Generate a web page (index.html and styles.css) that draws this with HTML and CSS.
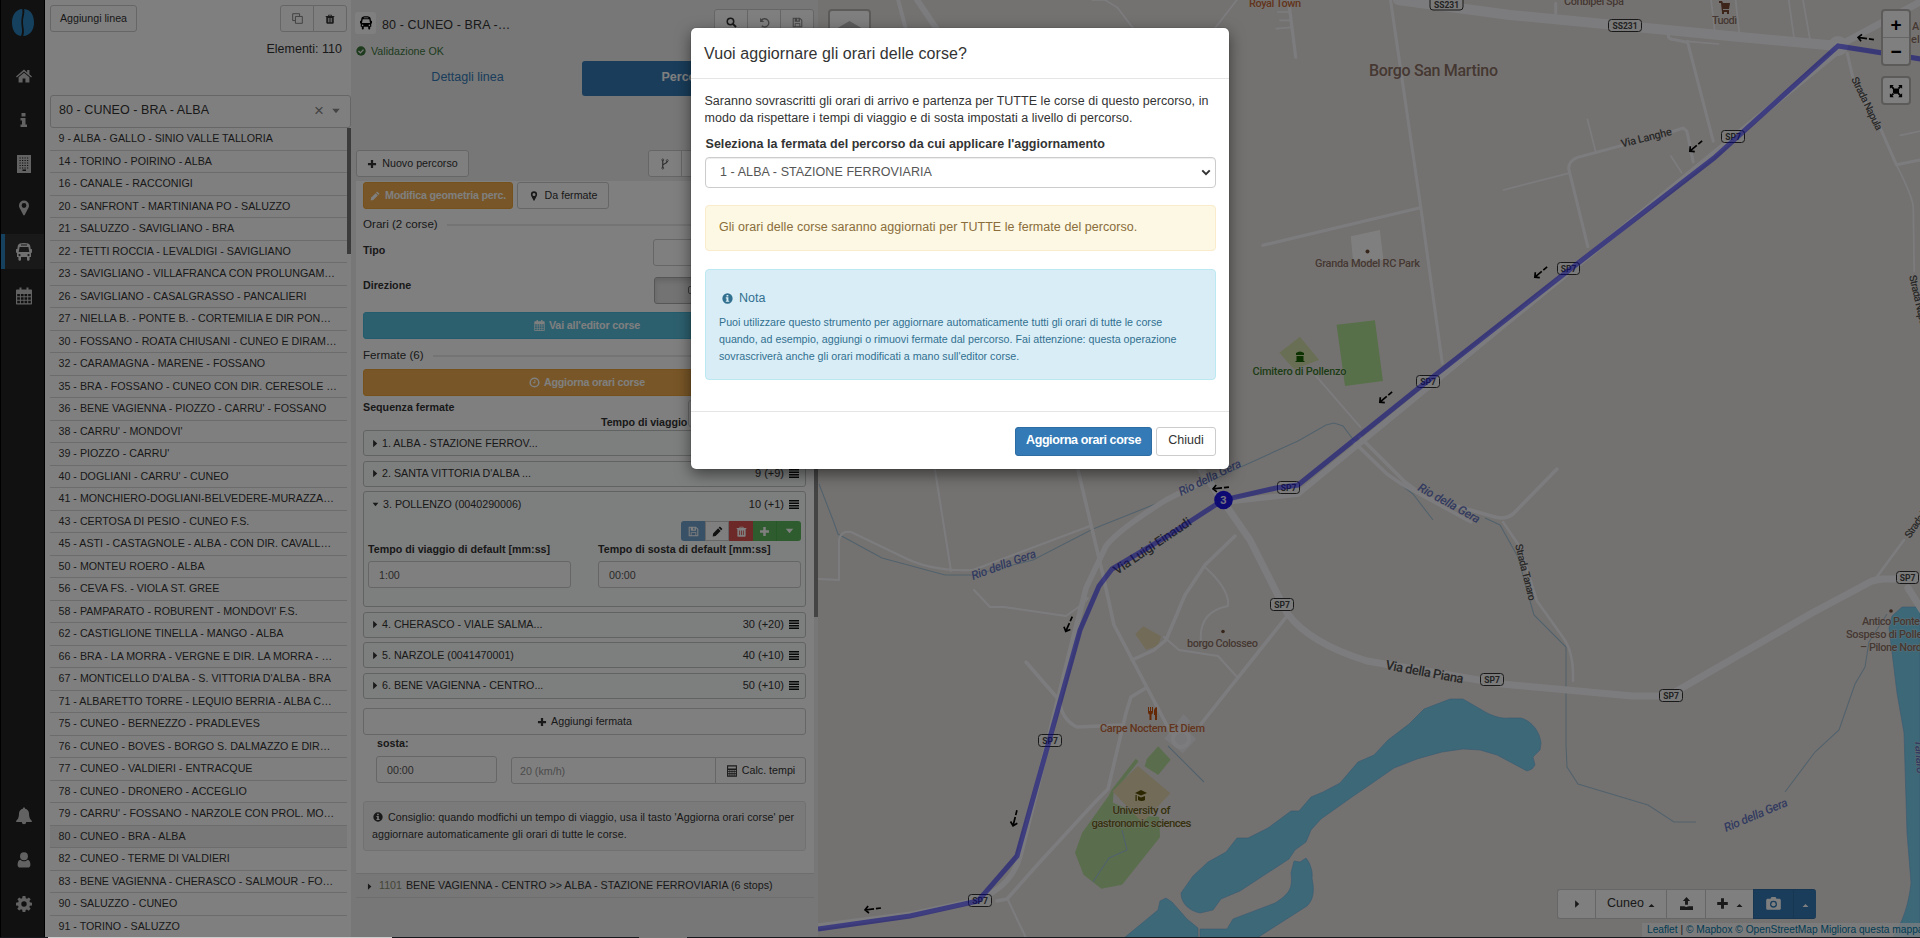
FILE: index.html
```html
<!DOCTYPE html>
<html lang="it">
<head>
<meta charset="utf-8">
<title>Linee</title>
<link rel="stylesheet" href="styles.css">
</head>
<body>
<svg class="defs" width="0" height="0" aria-hidden="true">
  <symbol id="home" viewBox="0 0 16 16"><path d="M8 1.600 0 8.400l.9 1L8 3.600l7.100 5.800.9-1-2.600-2.200V2h-2.200v2.400zM8 4.800 2.600 9.200V14.500h4V10.500h2.800v4h4V9.200z"/></symbol>
  <symbol id="info" viewBox="0 0 16 16"><path d="M5.500 1h4v3.400h-4zM4.500 6h5v6.500h1.500V15h-6.500v-2.500H6V8.500H4.500z"/></symbol>
  <symbol id="building" viewBox="0 0 16 18"><path d="M1 0h14v18H1z"/><path d="M3.500 3h9.500M3.500 5.500h9.500M3.500 8h9.500M3.500 10.500h9.500M3.500 13h9.500" stroke="#222" stroke-width="1.200" stroke-dasharray="1.200 1.300" fill="none"/><path d="M6.500 14.500h3.500V16H6.500z" fill="#222"/></symbol>
  <symbol id="pin" viewBox="0 0 16 16"><path fill-rule="evenodd" d="M8 .5a5 5 0 0 0-5 5c0 1.500.5 2.300 1.200 3.600L7.300 15a.8.8 0 0 0 1.400 0l3.100-5.900C12.500 7.800 13 7 13 5.500a5 5 0 0 0-5-5zm0 2.600a2.400 2.400 0 1 1 0 4.800 2.400 2.400 0 0 1 0-4.800z"/></symbol>
  <symbol id="bus" viewBox="0 0 16 18"><path fill-rule="evenodd" d="M8 0C4.500 0 2.200.8 1.900 2.500L1.300 6H.6C.2 6 0 6.300 0 6.700v3.100h1V14h1.400v2.400c0 1.700 2.600 1.700 2.600 0V14h6v2.400c0 1.700 2.600 1.700 2.600 0V14H15V9.800h1V6.700c0-.4-.2-.7-.6-.7h-.7l-.6-3.500C13.800.8 11.500 0 8 0zM5 1.500h6v1H5zM3.600 4h8.800l.9 5H2.700zM3.500 11a1.100 1.100 0 1 1 0 2.200 1.100 1.100 0 0 1 0-2.200zm9 0a1.100 1.100 0 1 1 0 2.200 1.100 1.100 0 0 1 0-2.200z"/></symbol>
  <symbol id="calendar" viewBox="0 0 16 17"><path fill-rule="evenodd" d="M3.500 0h2v2h5V0h2v2H15c.6 0 1 .4 1 1v13c0 .6-.4 1-1 1H1c-.6 0-1-.4-1-1V3c0-.6.4-1 1-1h2.500zM1.200 6.500v2.300h2.700V6.500zm3.700 0v2.300h2.700V6.500zm3.600 0v2.300h2.700V6.500zm3.700 0v2.300h2.600V6.500zM1.200 9.800v2.400h2.700V9.800zm3.700 0v2.400h2.700V9.800zm3.600 0v2.400h2.700V9.800zm3.700 0v2.400h2.600V9.800zM1.200 13.200v2.500h2.700v-2.500zm3.700 0v2.500h2.700v-2.500zm3.600 0v2.500h2.700v-2.500zm3.700 0v2.500h2.600v-2.500z"/></symbol>
  <symbol id="bell" viewBox="0 0 16 17"><path d="M8 0c.7 0 1.100.5 1.100 1.200C11.500 1.700 13 3.600 13 6c0 4.500 1.500 6 3 7.500 0 .7-.5 1-1 1h-4.800a2.200 2.200 0 0 1-4.400 0H1c-.5 0-1-.3-1-1C1.500 12 3 10.500 3 6c0-2.400 1.500-4.300 3.900-4.800C6.900.5 7.300 0 8 0z"/></symbol>
  <symbol id="user" viewBox="0 0 16 17"><circle cx="8" cy="4.500" r="4.200"/><path d="M4.300 8.200c2 2.200 5.400 2.200 7.400 0 2.200 0 3.100 2.600 3.100 5.300 0 2-1 3-2.600 3H3.800c-1.600 0-2.600-1-2.600-3 0-2.700.9-5.300 3.100-5.300z"/></symbol>
  <symbol id="gear" viewBox="0 0 16 16"><path fill-rule="evenodd" d="M6.600 0h2.800l.4 2.200 1.200.5L12.800 1.400l1.900 1.900-1.300 1.800.5 1.200 2.100.4v2.700l-2.200.4-.5 1.200 1.300 1.800-1.900 1.900-1.800-1.300-1.200.5-.4 2.100H6.600l-.4-2.200-1.200-.5-1.800 1.300-1.900-1.900L2.600 10.900l-.5-1.200L0 9.400V6.700l2.200-.4.5-1.200L1.400 3.300l1.900-1.900L5 2.700l1.200-.5zM8 5.300a2.700 2.700 0 1 0 0 5.400 2.700 2.700 0 0 0 0-5.400z"/></symbol>
  <symbol id="copy" viewBox="0 0 16 16"><path d="M5 5h10v10H5zM4.500 11H1V1h10v3.500" fill="none" stroke="currentColor" stroke-width="1.300"/></symbol>
  <symbol id="trash" viewBox="0 0 16 16"><path fill-rule="evenodd" d="M5.500 1h5l.8 2H15v1.500h-1V14c0 .8-.7 1.500-1.500 1.500h-9C2.700 15.500 2 14.800 2 14V4.500H1V3h3.700zm.9 1.200L6 3h4l-.4-.8zM4.700 6.500v6.500h1.200V6.500zm2.700 0v6.500h1.200V6.500zm2.700 0v6.500h1.200V6.500z"/></symbol>
  <symbol id="plus" viewBox="0 0 16 16"><path d="M6.200 1.500h3.600v4.700h4.700v3.600H9.800v4.700H6.200V9.800H1.500V6.200h4.700z"/></symbol>
  <symbol id="pencil" viewBox="0 0 16 16"><path d="M11.500.8 15.200 4.500 13.400 6.300 9.700 2.600zM8.900 3.400l3.700 3.700-7.400 7.400L1 15.200l.6-4.400z"/></symbol>
  <symbol id="search" viewBox="0 0 16 16"><circle cx="6.500" cy="6.500" r="4.700" fill="none" stroke="currentColor" stroke-width="2.200"/><path d="m10 10 4.600 4.600" stroke="currentColor" stroke-width="2.800"/></symbol>
  <symbol id="undo" viewBox="0 0 16 16"><path d="M3.500 4.800A6 6 0 1 1 4 12.800" fill="none" stroke="currentColor" stroke-width="1.900"/><path d="M1.500 1.200v6h6z"/></symbol>
  <symbol id="save" viewBox="0 0 16 16"><path fill-rule="evenodd" d="M1 1h10.500L15 4.500V15H1zm1.500 1.500v11H4V9h8v4.500h1.500V5l-2-2V7H4V2.500zM7.500 2.500V5.500h2v-3zM5.200 10.300v3.200h5.600v-3.200z"/></symbol>
  <symbol id="check" viewBox="0 0 16 16"><circle cx="8" cy="8" r="7.500"/><path d="m4 8 3 3 5-5.200" fill="none" stroke="#f0f0f0" stroke-width="2.200"/></symbol>
  <symbol id="infoc" viewBox="0 0 16 16"><path fill-rule="evenodd" d="M8 .5a7.500 7.500 0 1 1 0 15 7.500 7.500 0 0 1 0-15zM6.600 2.800v2.400h2.600V2.800zM5.500 6.300v1.600h1.100v3.300H5.500v1.700h5v-1.700H9.300V6.300z"/></symbol>
  <symbol id="clock" viewBox="0 0 16 16"><circle cx="8" cy="8" r="6.300" fill="none" stroke="currentColor" stroke-width="2.200"/><path d="M8.500 4.300v4.200h-3" fill="none" stroke="currentColor" stroke-width="1.500"/></symbol>
  <symbol id="bars" viewBox="0 0 10 9"><path d="M0 0h10v1.500H0zM0 2.500h10V4H0zM0 5h10v1.500H0zM0 7.500h10V9H0z"/></symbol>
  <symbol id="fork" viewBox="0 0 16 16"><path d="M5 3v10M5 10c0-3 6-1.500 6-6" fill="none" stroke="currentColor" stroke-width="1.500"/><g fill="none" stroke="currentColor"><circle cx="5" cy="2.500" r="1.300"/><circle cx="5" cy="13.500" r="1.300"/><circle cx="11" cy="3.500" r="1.300"/></g></symbol>
  <symbol id="calc" viewBox="0 0 16 17"><path fill-rule="evenodd" d="M1 .5h14v16H1zM2.500 2v3h11V2zm0 5v1.800h2V7zm3 0v1.800h2V7zm3 0v1.800h2V7zm3 0v1.800h2V7zm-9 3v1.800h2V10zm3 0v1.800h2V10zm3 0v1.800h2V10zm3 0v1.800h2V10zm-9 3v1.800h2V13zm3 0v1.800h2V13zm3 0v1.800h2V13zm3 0v1.800h2V13z"/></symbol>
  <symbol id="upload" viewBox="0 0 16 16"><path d="m8 0 4.500 5H9.800v4.500H6.200V5H3.500zM0 11.500h5.500c.5 1 4.500 1 5 0H16V16H0z"/></symbol>
  <symbol id="camera" viewBox="0 0 18 16"><path fill-rule="evenodd" d="M6.500 0h5l1.200 2.200H16c1.100 0 2 .8 2 1.800v10c0 1-.9 1.800-2 1.800H2c-1.100 0-2-.8-2-1.800V4c0-1 .9-1.800 2-1.800h3.300zM9 4.500a4.300 4.300 0 1 0 0 8.600 4.300 4.300 0 0 0 0-8.600z"/><circle cx="9" cy="8.800" r="2.600"/></symbol>
  <symbol id="full" viewBox="0 0 16 16"><path d="M4.500 5h7v6h-7zM1 1h4.500L4 2.500l2 2L4.500 6l-2-2L1 5.500zM15 1h-4.500L12 2.500l-2 2L11.500 6l2-2L15 5.500zM1 15h4.500L4 13.500l2-2L4.500 10l-2 2L1 10.500zM15 15h-4.500l1.500-1.500-2-2 1.500-1.500 2 2 1.500-1.500z"/></symbol>
  <symbol id="right" viewBox="0 0 8 12"><path d="M1.500 1v10L7 6z"/></symbol>
  <symbol id="down" viewBox="0 0 12 8"><path d="M1 1h10L6 7z"/></symbol>
  <symbol id="up" viewBox="0 0 12 6"><path d="M0 6h12L6 0z"/></symbol>
  <symbol id="chev" viewBox="0 0 12 8"><path d="m1.500 1.500 4.500 4.500 4.500-4.500" fill="none" stroke="currentColor" stroke-width="2.400"/></symbol>
  <symbol id="arrow" viewBox="-9 -5 18 10" overflow="visible"><path d="M-8 0h9M3 0h5M-4.500-3.500l-3.500 3.500 3.500 3.500" fill="none" stroke="#000" stroke-width="1.700"/></symbol>
</svg>

<div class="app">
  <nav class="side">
    <svg class="logo" viewBox="0 0 22 27"><path d="M10.300 0C4 .3 0 6 0 13.500 0 21 3.500 26.500 9 27c2.200-5 .3-9 .3-14 0-5 1.700-8 1-13z"/><path d="M12.200 0c.7 5-1.200 8-1.200 13s2 9 .2 14C18 26.800 22 21 22 13.500 22 6 18.500.4 12.200 0z"/></svg>
    <a><svg><use href="#home"/></svg></a>
    <a><svg><use href="#info"/></svg></a>
    <a><svg class="tall"><use href="#building"/></svg></a>
    <a><svg><use href="#pin"/></svg></a>
    <a class="on"><svg class="tall"><use href="#bus"/></svg></a>
    <a><svg class="tall"><use href="#calendar"/></svg></a>
    <span class="grow"></span>
    <a><svg class="tall"><use href="#bell"/></svg></a>
    <a><svg><use href="#user"/></svg></a>
    <a><svg><use href="#gear"/></svg></a>
  </nav>

  <section class="lines">
    <div class="lines-top">
      <button class="btn add">Aggiungi linea</button>
      <div class="group"><button class="btn ib"><svg class="dim"><use href="#copy"/></svg></button><button class="btn ib"><svg class="i10"><use href="#trash"/></svg></button></div>
    </div>
    <div class="count">Elementi: 110</div>
    <div class="combo"><span>80 - CUNEO - BRA - ALBA</span><i>×</i><svg><use href="#down"/></svg></div>
    <div class="scroller">
      <ul class="list">
        <li>9 - ALBA - GALLO - SINIO VALLE TALLORIA</li>
        <li>14 - TORINO - POIRINO - ALBA</li>
        <li>16 - CANALE - RACCONIGI</li>
        <li>20 - SANFRONT - MARTINIANA PO - SALUZZO</li>
        <li>21 - SALUZZO - SAVIGLIANO - BRA</li>
        <li>22 - TETTI ROCCIA - LEVALDIGI - SAVIGLIANO</li>
        <li>23 - SAVIGLIANO - VILLAFRANCA CON PROLUNGAM…</li>
        <li>26 - SAVIGLIANO - CASALGRASSO - PANCALIERI</li>
        <li>27 - NIELLA B. - PONTE B. - CORTEMILIA E DIR PON…</li>
        <li>30 - FOSSANO - ROATA CHIUSANI - CUNEO E DIRAM…</li>
        <li>32 - CARAMAGNA - MARENE - FOSSANO</li>
        <li>35 - BRA - FOSSANO - CUNEO CON DIR. CERESOLE …</li>
        <li>36 - BENE VAGIENNA - PIOZZO - CARRU' - FOSSANO</li>
        <li>38 - CARRU' - MONDOVI'</li>
        <li>39 - PIOZZO - CARRU'</li>
        <li>40 - DOGLIANI - CARRU' - CUNEO</li>
        <li>41 - MONCHIERO-DOGLIANI-BELVEDERE-MURAZZA…</li>
        <li>43 - CERTOSA DI PESIO - CUNEO F.S.</li>
        <li>45 - ASTI - CASTAGNOLE - ALBA - CON DIR. CAVALL…</li>
        <li>50 - MONTEU ROERO - ALBA</li>
        <li>56 - CEVA FS. - VIOLA ST. GREE</li>
        <li>58 - PAMPARATO - ROBURENT - MONDOVI' F.S.</li>
        <li>62 - CASTIGLIONE TINELLA - MANGO - ALBA</li>
        <li>66 - BRA - LA MORRA - VERGNE E DIR. LA MORRA - …</li>
        <li>67 - MONTICELLO D'ALBA - S. VITTORIA D'ALBA - BRA</li>
        <li>71 - ALBARETTO TORRE - LEQUIO BERRIA - ALBA C…</li>
        <li>75 - CUNEO - BERNEZZO - PRADLEVES</li>
        <li>76 - CUNEO - BOVES - BORGO S. DALMAZZO E DIR…</li>
        <li>77 - CUNEO - VALDIERI - ENTRACQUE</li>
        <li>78 - CUNEO - DRONERO - ACCEGLIO</li>
        <li>79 - CARRU' - FOSSANO - NARZOLE CON PROL. MO…</li>
        <li class="sel">80 - CUNEO - BRA - ALBA</li>
        <li>82 - CUNEO - TERME DI VALDIERI</li>
        <li>83 - BENE VAGIENNA - CHERASCO - SALMOUR - FO…</li>
        <li>90 - SALUZZO - CUNEO</li>
        <li>91 - TORINO - SALUZZO</li>
      </ul>
      <div class="thumb"></div>
    </div>
  </section>

  <section class="detail">
    <div class="head">
      <span class="badge"><svg><use href="#bus"/></svg></span>
      <span class="title">80 - CUNEO - BRA -…</span>
      <div class="group"><button class="btn ib"><svg><use href="#search"/></svg></button><button class="btn ib off"><svg><use href="#undo"/></svg></button><button class="btn ib off"><svg><use href="#save"/></svg></button></div>
    </div>
    <div class="valid"><svg><use href="#check"/></svg>Validazione OK</div>
    <div class="tabs"><a>Dettagli linea</a><a class="active">Percorsi</a></div>
    <div class="tools">
      <button class="btn"><svg class="i10"><use href="#plus"/></svg>Nuovo percorso</button>
      <div class="group"><button class="btn ib"><svg><use href="#fork"/></svg></button><button class="btn ib"></button><button class="btn ib"></button><button class="btn ib"></button><button class="btn ib"></button></div>
    </div>
    <div class="card">
      <div class="row"><button class="btn warn mod"><svg class="i10"><use href="#pencil"/></svg>Modifica geometria perc.</button><button class="btn daf"><svg class="i10"><use href="#pin"/></svg>Da fermate</button></div>
      <div class="legend l1">Orari (2 corse)</div>
      <div class="field f1"><b>Tipo</b><span class="box"></span></div>
      <div class="field f2"><b>Direzione</b><span class="box pressed"><i></i></span></div>
      <button class="btn cyan wide"><svg class="i11"><use href="#calendar"/></svg>Vai all'editor corse</button>
      <div class="legend l2">Fermate (6)</div>
      <button class="btn warn wide"><svg class="i11"><use href="#clock"/></svg>Aggiorna orari corse</button>
      <div class="seq"><b>Sequenza fermate</b><b class="tv">Tempo di viaggio</b><span class="seqbox"></span></div>
      <div class="stop"><div class="sh"><svg class="car"><use href="#right"/></svg><span>1. ALBA - STAZIONE FERROV...</span><em>0</em><svg class="bars"><use href="#bars"/></svg></div></div>
      <div class="stop"><div class="sh"><svg class="car"><use href="#right"/></svg><span>2. SANTA VITTORIA D'ALBA ...</span><em>9 (+9)</em><svg class="bars"><use href="#bars"/></svg></div></div>
      <div class="stop open"><div class="sh"><svg class="car dn"><use href="#down"/></svg><span>3. POLLENZO (0040290006)</span><em>10 (+1)</em><svg class="bars"><use href="#bars"/></svg></div>
        <div class="acts"><span class="a-save"><svg><use href="#save"/></svg></span><span class="a-edit"><svg><use href="#pencil"/></svg></span><span class="a-del"><svg><use href="#trash"/></svg></span><span class="a-add"><svg><use href="#plus"/></svg></span><span class="a-more"><svg class="dn"><use href="#down"/></svg></span></div>
        <div class="times"><label><b>Tempo di viaggio di default [mm:ss]</b><span class="inp">1:00</span></label><label><b>Tempo di sosta di default [mm:ss]</b><span class="inp">00:00</span></label></div>
      </div>
      <div class="stop"><div class="sh"><svg class="car"><use href="#right"/></svg><span>4. CHERASCO - VIALE SALMA...</span><em>30 (+20)</em><svg class="bars"><use href="#bars"/></svg></div></div>
      <div class="stop"><div class="sh"><svg class="car"><use href="#right"/></svg><span>5. NARZOLE (0041470001)</span><em>40 (+10)</em><svg class="bars"><use href="#bars"/></svg></div></div>
      <div class="stop"><div class="sh"><svg class="car"><use href="#right"/></svg><span>6. BENE VAGIENNA - CENTRO...</span><em>50 (+10)</em><svg class="bars"><use href="#bars"/></svg></div></div>
      <button class="btn wide addstop"><svg class="i10"><use href="#plus"/></svg>Aggiungi fermata</button>
      <b class="sosta">sosta:</b>
      <div class="speed"><span class="inp s1">00:00</span><span class="inp s2">20 (km/h)</span><button class="btn calc"><svg><use href="#calc"/></svg>Calc. tempi</button></div>
      <div class="tip"><svg><use href="#infoc"/></svg>Consiglio: quando modfichi un tempo di viaggio, usa il tasto 'Aggiorna orari corse' per<br>aggiornare automaticamente gli orari di tutte le corse.</div>
    </div>
    <div class="route"><svg class="car"><use href="#right"/></svg><span class="code">1101</span>BENE VAGIENNA - CENTRO &gt;&gt; ALBA - STAZIONE FERROVIARIA (6 stops)</div>
    <div class="thumb2"></div>
  </section>

  <main class="map">
    <svg class="canvas" viewBox="818 0 1102 938">
      <rect x="818" width="1102" height="938" fill="#e8e4e0"/>
      <!-- green areas -->
      <g transform="translate(1220 0) scale(.44643 .33333)">
        <path fill="#fff" d="M293 709 358 690l8 90-68 2z"/>
        <path fill="#aee094" d="m261 974 86-13 18 182-85 15z"/>
        <path fill="#d3dfaa" d="m133 1058 46-48 43 70-56 28z"/>
      </g>
      <g transform="translate(810 460) scale(.35714 .33333)">
        <path fill="#b4dc9c" d="m912 896 8 8-70 94-2 30 90 40 40 2 2 62-106 142-58 12-50-42-24-66 20-60 74-110 8-18z"/>
        <path fill="#b4dc9c" d="m975 859 35 40-35 46-38-26 6-22z"/>
        <path fill="#e2d6ae" d="m918 918 91 82-78 88-84-94z"/>
        <path fill="#e2d6ae" d="m911 523 22-24 50 30-8 28-34 12z"/>
        <path fill="#f0eef4" d="m1046 762 18 20-6 30 24 26-38 42-52-44z"/>
      </g>
      <!-- water -->
      <g fill="#78d0f0" stroke="#74b4e4" stroke-width=".6">
        <path d="M1541 763C1540 752 1532 741 1521 738L1509 737C1500 736 1490 725 1482 716L1463 699H1450L1424 709 1409 724 1388 740 1374 755 1358 762 1340 783 1323 792 1311 797 1299 811H1291L1268 828 1248 838H1237L1226 852 1208 862 1193 876 1181 893C1181 904 1190 911 1200 913L1213 910 1221 899 1240 891 1289 859 1295 850 1306 842 1311 830 1321 819 1352 797 1371 784 1394 768 1417 759 1442 752 1463 749 1480 750 1497 755 1527 771 1532 769 1535 765 1533 757 1540 750Z" visibility="hidden"/>
        <path d="M1541 743C1540 732 1532 721 1521 718H1509C1500 719 1490 715 1482 710L1463 699H1450L1424 709 1409 724 1388 740 1374 755 1358 762 1340 783 1323 792 1311 797 1299 811H1291L1268 828 1248 838H1237L1226 852 1208 862 1193 876 1181 893C1181 904 1190 911 1200 913L1213 910 1221 899 1240 891 1289 859 1295 850 1306 842 1311 830 1321 819 1352 797 1371 784 1394 768 1417 759 1442 752 1463 749 1480 750 1497 755 1527 771 1532 769 1535 765 1533 757 1540 750Z"/>
        <path d="m1166 898-6 3-2 9-34 28h74v-10l-11-9-15-17zM1200 938v-9h27l6-10 42-16c14-9 18-14 16-30l3-12 6 1 6-4c5 6 7 15 6 20 3 14 1 22-5 28l-50 32z"/>
        <path d="M1920 607h-18l-10 9-3 12 8 65 7 40 3 100 4 50c-3 28-12 48-26 65h35z"/>
      </g>
      <!-- streams -->
      <g fill="none" stroke="#a3c3d8" stroke-width="1.100">
        <path d="m819 484 14 36 5 14 44 24 63 17h28l60-15 60-31 95-38 110-50 28-16 8-2 9 3 15 20 24 24 31 24 20 26M1485 518l15 7 18 32 12 44 4 14 32 32v98l1 22 11 17 70 21 26 17h22M1785 792l30-40 24-22 16-46 10-17 4-25 18-28M1168 746l36 36"/>
        <path d="m1122 830 5 20-18 8-16 24"/>
      </g>
      <!-- minor roads -->
      <g fill="none" stroke="#f9f9fd" stroke-linejoin="round" stroke-linecap="round">
        <g transform="translate(810 0) scale(.35714 .33333)" stroke-width="5">
          <path d="m247 0 22 90" stroke-width="11"/><path d="m300 0 60 95" stroke-width="17"/>
          <path d="M790 0h36l34 22 50 70M1195 0l-65 90M1310 36h32M1316 61h28M1306 86l40-4"/><path d="m1340 0 20 172" stroke-width="9"/>
        </g>
        <g transform="translate(1220 0) scale(.44643 .33333)">
          <g stroke-width="3"><path d="m382 0 68 625 48 465M96 736l350-112M824 740l-43-234q0-24 20-34l100-36M1010 396l28-12 8 10 14 92M1047 124l58 300M752 40V10M1515 494l-36-110-60-144-14-80M1515 494l60-16M1005 105q-4 12 15 14l25 8" vector-effect="non-scaling-stroke"/></g>
          <g stroke-width="1.700"><path d="m780 520-145 50M823 358l18 95M1010 468l24 50M1047 124l70 8M1515 494q38 100 38 130l2 190M1524 406l50-14M1274 0l12 115M1306 0l16 122M1155 0l8 98M1100 0l8 90M210 1120l105 162" vector-effect="non-scaling-stroke"/></g>
        </g>
        <g stroke-width="3.500"><path d="m1360 437 45 45 20 15 70 20q10 3 18-3l44-45M1354 442l33 32 16 11 68 37M1078 470l25 105 11 50 57 108M1132 660l22-10 12-10 19-45 20-30 30-29"/>
          <path d="M1146 688l-15 9-5 16-18 76-12 12-57 62-32 36-10 2M1026 662l33 38q3 20 18 27l46-2M1287 616l-86 108"/><path d="m1503 522 17 25 17 54 25 35q12 15 11 45M1876 578l28-38" stroke-width="2.500"/></g>
        <g stroke-width="2"><path d="m935 470 16 101M819 579l20 1V540q2-10 12-8l50 24q30 16 72 14l117-44M974 590l16 17h14l62 9 14-10 8-8M1206 568q24 22 22 38-30 6-27 36M1164 637l15 13 39 6 20 22M1008 900l18 38"/></g>
        <circle cx="1181" cy="739" r="8" stroke-width="4"/>
        <!-- main roads -->
        <path d="M1398 0 1510 15 1740 37 1838 46" stroke-width="10"/><path d="M1838 46 1920 2" stroke-width="7"/><circle cx="1838" cy="46" r="7" fill="#fff" stroke-width="6"/>
        <path d="M1840 50 1298 494 1226 502M818 926l95-12 65-14q34-14 42-44l28-114 38-154 20-42q12-16 60-46l58-29" stroke-width="5.500"/>
        <path d="m1200 468 50 72 37 73q22 30 80 48l135 23 130 12h36l144-83 60-32 10-2h42" stroke-width="7"/>
        <path d="m1908 588 14 22" stroke-width="7"/>
      </g>
      <!-- road shields -->
      <g class="shields">
        <g><rect x="1430" y="-4" width="33" height="14" rx="3"/><text x="1446.500" y="7.500">SS231</text></g>
        <g><rect x="1608.500" y="19.500" width="33" height="12" rx="3"/><text x="1625" y="29">SS231</text></g>
        <g><rect x="1721.500" y="130.500" width="23" height="12" rx="3"/><text x="1733" y="140">SP7</text></g>
        <g><rect x="1557.500" y="262.500" width="22" height="12" rx="3"/><text x="1568.500" y="272">SP7</text></g>
        <g><rect x="1416.500" y="375.500" width="23" height="12" rx="3"/><text x="1428" y="385">SP7</text></g>
        <g><rect x="1277.500" y="481.500" width="22" height="12" rx="3"/><text x="1288.500" y="491">SP7</text></g>
        <g><rect x="1270.500" y="598.500" width="23" height="12" rx="3"/><text x="1282" y="608">SP7</text></g>
        <g><rect x="1038.500" y="734.500" width="23" height="12" rx="3"/><text x="1050" y="744">SP7</text></g>
        <g><rect x="968.500" y="894.500" width="23" height="12" rx="3"/><text x="980" y="904">SP7</text></g>
        <g><rect x="1480.500" y="673.500" width="23" height="12" rx="3"/><text x="1492" y="683">SP7</text></g>
        <g><rect x="1659.500" y="689.500" width="23" height="12" rx="3"/><text x="1671" y="699">SP7</text></g>
        <g><rect x="1896.500" y="571.500" width="22" height="12" rx="3"/><text x="1907.500" y="581">SP7</text></g>
      </g>
      <!-- place, road and river names -->
      <g class="lab">
        <text class="brown" x="1369" y="76" font-size="16" textLength="129">Borgo San Martino</text>
        <text class="orange" x="1249" y="7" font-size="11" textLength="52">Royal Town</text>
        <text class="brown" x="1564" y="4.500" font-size="11" textLength="60">Conbipel Spa</text>
        <text class="brown" x="1712" y="24" font-size="11" textLength="25">Tuodì</text>
        <path fill="#7a4a34" d="M1719 1h3l1 2h7l-1 6h-6v1h6v2h-7l-1-9h-2zM1722 12h2v2h-2zm5 0h2v2h-2z"/>
        <text class="brown" x="1315" y="267" font-size="11" textLength="105">Granda Model RC Park</text>
        <circle cx="1367.500" cy="251.500" r="2" fill="#6d4c38"/>
        <text class="green" x="1252.500" y="375" font-size="11" textLength="94">Cimitero di Pollenzo</text>
        <path fill="#176400" d="M1296 353q4-3 8 0v2h-8zm.5 3h7v5h1v1h-9v-1h1z"/>
        <text class="dark" font-size="11" transform="translate(1622 147.500) rotate(-14)" textLength="52">Via Langhe</text>
        <text class="dark" font-size="10.500" transform="translate(1851 79) rotate(64)" textLength="58">Strada Napula</text>
        <text class="dark" font-size="10.500" transform="translate(1909 276) rotate(77)" textLength="58">Strada Napula</text>
        <text class="dark" font-size="10.500" transform="translate(1515 545) rotate(76)" textLength="58">Strada Tanaro</text>
        <text class="dark" font-size="10.500" transform="translate(1910 539) rotate(-56)" textLength="56">Strada Napula</text>
        <text class="dark" font-size="13" transform="translate(1385 669) rotate(10.500)" textLength="79">Via della Piana</text>
        <text class="dark" font-size="13" transform="translate(1117 575) rotate(-34)" textLength="91">Via Luigi Einaudi</text>
        <text class="river" font-size="12" transform="translate(973 580) rotate(-20)" textLength="68">Rio della Gera</text>
        <text class="river" font-size="12" transform="translate(1181 496) rotate(-26)" textLength="68">Rio della Gera</text>
        <text class="river" font-size="12" transform="translate(1417 490) rotate(29)" textLength="69">Rio della Gera</text>
        <text class="river" font-size="12" transform="translate(1726 832) rotate(-23)" textLength="68">Rio della Gera</text>
        <text class="river" font-size="12" transform="translate(1915 740) rotate(87)" textLength="34">Tanaro</text>
        <text class="brown" x="1187" y="647" font-size="11" textLength="71">borgo Colosseo</text>
        <circle cx="1223" cy="631.500" r="1.800" fill="#6d4c38"/>
        <text class="orange" x="1100" y="732" font-size="11" textLength="105">Carpe Noctem Et Diem</text>
        <path fill="#c8500a" d="M1148 707h1v4h1v-4h1v4h1v-4h1v5q0 2-1.500 2.500V720h-2v-5.500q-1.500-.5-1.500-2.500zM1157 707v13h-2v-5h-1v-5q1-3 3-3z"/>
        <text class="olive" x="1112.500" y="813.500" font-size="11.500" textLength="58">University of</text>
        <text class="olive" x="1091.500" y="826.500" font-size="11.500" textLength="100">gastronomic sciences</text>
        <path fill="#5a4e00" d="m1135 793 6-3 6 3-6 2.500zM1138 796l3 1.500 4-1.500v4q-3 2-7 0zM1135.500 795h1.200v6h-1.200z"/>
        <text class="brown" x="1862" y="625" font-size="11" textLength="58">Antico Ponte</text>
        <text class="brown" x="1846" y="638" font-size="11" textLength="93">Sospeso di Pollenzo</text>
        <text class="brown" x="1860" y="651" font-size="11" textLength="62">– Pilone Nord</text>
        <circle cx="1891" cy="611" r="1.800" fill="#6d4c38"/>
        <text class="brown" x="1912" y="30" font-size="11">Alba</text>
        <text class="brown" x="1911" y="43" font-size="11">el Tanaro</text>
      </g>
      <path d="M1924 59.500 1838 46 1714 158 1564 274 1415 391 1298 485 1276 488 1223 500 1166 537 1112 569 1099 586 1080 630 1017 856 978 901 910 916 818 929" fill="none" stroke="#1410ff" stroke-opacity=".54" stroke-width="5"/>
      <g>
        <use href="#arrow" x="-9" y="-5" width="18" height="10" transform="translate(1866 38.500) rotate(8)"/>
        <use href="#arrow" x="-9" y="-5" width="18" height="10" transform="translate(1696 146) rotate(-40)"/>
        <use href="#arrow" x="-9" y="-5" width="18" height="10" transform="translate(1541 272) rotate(-40)"/>
        <use href="#arrow" x="-9" y="-5" width="18" height="10" transform="translate(1386 397) rotate(-40)"/>
        <use href="#arrow" x="-9" y="-5" width="18" height="10" transform="translate(1221 488) rotate(-6)"/>
        <use href="#arrow" x="-9" y="-5" width="18" height="10" transform="translate(1069 624) rotate(-66)"/>
        <use href="#arrow" x="-9" y="-5" width="18" height="10" transform="translate(1015 818) rotate(-76)"/>
        <use href="#arrow" x="-9" y="-5" width="18" height="10" transform="translate(873 909) rotate(-7)"/>
      </g>
      <circle cx="1223.500" cy="500" r="9.300" fill="#1c14e6"/>
      <text x="1223.500" y="504" class="num">3</text>
    </svg>
    <div class="layers"><svg viewBox="0 0 26 26"><path d="M13 2 1 9l12 7 12-7z" fill="#bbb"/><path d="m1 13 12 7 12-7v3l-12 7-12-7z" fill="#888"/></svg></div>
    <div class="zoomc"><span>+</span><span>−</span></div>
    <div class="fullc"><svg><use href="#full"/></svg></div>
    <div class="bar"><span class="b1"><svg class="car"><use href="#right"/></svg></span><span class="b2">Cuneo<svg class="up"><use href="#up"/></svg></span><span class="b3"><svg><use href="#upload"/></svg></span><span class="b4"><svg><use href="#plus"/></svg><svg class="up"><use href="#up"/></svg></span><span class="b5"><svg class="cam"><use href="#camera"/></svg></span><span class="b6"><svg class="up"><use href="#up"/></svg></span></div>
    <div class="attr"><a>Leaflet</a> | <a>© Mapbox</a> <a>© OpenStreetMap</a> <a>Migliora questa mappa</a></div>
  </main>
</div>
<div class="backdrop"></div>
<div class="strip"></div>

<div class="modal">
  <div class="m-head">Vuoi aggiornare gli orari delle corse?</div>
  <div class="m-body">
    <p class="intro">Saranno sovrascritti gli orari di arrivo e partenza per TUTTE le corse di questo percorso, in<br>modo da rispettare i tempi di viaggio e di sosta impostati a livello di percorso.</p>
    <b class="m-label">Seleziona la fermata del percorso da cui applicare l'aggiornamento</b>
    <div class="m-select">1 - ALBA - STAZIONE FERROVIARIA<svg><use href="#chev"/></svg></div>
    <div class="alert">Gli orari delle corse saranno aggiornati per TUTTE le fermate del percorso.</div>
    <div class="note"><div class="n-title"><svg><use href="#infoc"/></svg>Nota</div><p>Puoi utilizzare questo strumento per aggiornare automaticamente tutti gli orari di tutte le corse<br>quando, ad esempio, aggiungi o rimuovi fermate dal percorso. Fai attenzione: questa operazione<br>sovrascriverà anche gli orari modificati a mano sull'editor corse.</p></div>
  </div>
  <div class="m-foot"><button class="mbtn primary">Aggiorna orari corse</button><button class="mbtn">Chiudi</button></div>
</div>
</body>
</html>
```
FILE: styles.css
```css
* { box-sizing: border-box; }
body { margin: 0; width: 1920px; height: 938px; overflow: hidden; position: relative; font: 10.7px/15px "Liberation Sans", Arial, sans-serif; color: #333; background: #fff; }
svg { fill: currentColor; flex: none; }
.defs { position: absolute; }
button { font: inherit; color: inherit; margin: 0; }
ul { list-style: none; margin: 0; padding: 0; }
.app { display: flex; width: 1920px; height: 938px; }

.side { width: 45px; background: #222; border-left: 1px solid #000; border-right: 1px solid #000; display: flex; flex-direction: column; color: #c4c4c4; padding-bottom: 8px; }
.logo { width: 22px; height: 27px; margin: 9px 0 22px 11px; fill: #2a83be; }
.side a { height: 35px; margin-bottom: 9px; display: flex; align-items: center; padding-left: 15px; }
.side a svg { width: 16px; height: 16px; }
.side a svg.tall { height: 18px; }
.side .on { background: #333; border-left: 4px solid #2a83be; padding-left: 11px; color: #e0e0e0; }
.grow { flex: 1; }

.btn { height: 27px; border: 1px solid #ccc; border-radius: 3px; background: #fff; display: flex; align-items: center; justify-content: center; padding: 0 9px; white-space: nowrap; }
.btn svg { width: 12px; height: 12px; }
.btn svg.i10 { width: 10px; height: 10px; }
.btn svg.i11 { width: 11px; height: 11px; margin-left: 5px; }
.group { display: flex; }
.group .btn { width: 34px; margin-left: -1px; border-radius: 0; padding: 0; }
.group .btn:first-child { border-radius: 3px 0 0 3px; margin-left: 0; }
.group .btn:last-child { border-radius: 0 3px 3px 0; }
.off { color: #888; }
.dim { color: #777; }
.ib svg { width: 11px; height: 11px; }

.lines { width: 306px; padding: 5px 0 0 5px; display: flex; flex-direction: column; }
.lines-top { display: flex; justify-content: space-between; padding-right: 4px; }
.lines-top .add { width: 87px; }
.count { font-size: 12.500px; line-height: 16px; text-align: right; margin: 9px 9px 0 0; }
.combo { margin-top: 38px; height: 33px; border: 1px solid #ccc; border-radius: 3px; display: flex; align-items: center; padding: 0 9px; font-size: 12.500px; padding-bottom: 2px; width: 301px; }
.combo span { flex: 1; margin-left: -1px; letter-spacing: .06px; }
.combo i { font: 17px/15px "Liberation Sans", sans-serif; color: #888; margin-right: 7px; }
.combo svg { width: 10px; height: 6px; color: #888; }
.scroller { display: flex; flex: 1; min-height: 0; overflow: hidden; }
.list { width: 297px; }
.list li { height: 22.500px; line-height: 20.500px; border-bottom: 1px solid #d8d8d8; padding-left: 8.500px; white-space: nowrap; }
.list .sel { background: #f0f0f0; }
.thumb { width: 4px; height: 126px; background: #777; }

.detail { width: 467px; background: #efefef; padding: 9px 4px 0 5px; position: relative; }
.head { display: flex; height: 27px; align-items: flex-start; }
.badge { width: 21px; height: 22px; margin: 3px 5px 0 -1px; background: #fff; border-radius: 3px; display: flex; align-items: center; justify-content: center; color: #000; }
.badge svg { width: 12px; height: 14px; }
.title { font-size: 12.500px; margin: 9px 0 0 1px; flex: 1; letter-spacing: .1px; }
.valid { color: #3c763d; display: flex; align-items: center; margin-top: 7px; height: 16px; gap: 5px; }
.valid svg { width: 10px; height: 10px; }
.tabs { display: flex; margin-top: 2px; font-size: 12.500px; color: #337ab7; }
.tabs a { flex: 1; height: 35px; line-height: 33px; text-align: center; margin-right: 3px; }
.tabs .active { background: #337ab7; color: #fff; border-radius: 3px; flex: 0 0 232px; margin: 0; font-weight: bold; padding-right: 23px; }
.tools { display: flex; justify-content: space-between; margin-top: 54px; height: 31px; }
.tools > .btn { width: 113px; gap: 5px; }
.tools .group svg { width: 12px; height: 12px; color: #555; }

.card { background: #fff; padding: 1px 8px 0 7px; height: 692px; display: flex; flex-direction: column; }
.row { display: flex; gap: 4px; }
.mod { width: 150px; gap: 5px; padding: 0; }
.daf { width: 92px; gap: 6px; }
.warn { background: #f0ad4e; border-color: #eea236; color: #fff; font-weight: bold; letter-spacing: -.2px; }
.cyan { background: #5bc0de; border-color: #46b8da; color: #fff; font-weight: bold; letter-spacing: -.15px; }
.wide { width: 100%; flex: none; gap: 4px; }
.legend { font-size: 11.600px; display: flex; align-items: center; gap: 9px; height: 16px; flex: none; }
.legend::after { content: ""; flex: 1; height: 2px; background: #e8e8e8; margin-top: 3px; }
.l1 { margin-top: 6px; }
.l2 { margin: 7px 0; }
.field { display: flex; justify-content: space-between; flex: none; }
.field b { margin-top: 4px; }
.f1 { margin-top: 8px; }
.f2 { margin: 11px 0 8px; }
.f2 b { margin-top: 1px; }
.box { width: 153px; height: 27px; border: 1px solid #ccc; border-radius: 3px; background: #fff; }
.pressed { width: 152px; background: #e6e6e6; border-color: #adadad; box-shadow: inset 0 3px 5px rgba(0,0,0,.125); padding: 8px 0 0 33px; }
.pressed i { display: block; width: 8px; height: 8px; border: 1px solid #777; border-radius: 2px; }
.seq { height: 34px; flex: none; display: flex; flex-wrap: wrap; position: relative; padding-top: 4px; }
.seq b { height: 15px; width: 100%; }
.seq .tv { padding-left: 238px; letter-spacing: -.05px; }
.seqbox { position: absolute; right: 0; top: 4px; width: 118px; height: 27px; border: 1px solid #ccc; border-radius: 3px; }
.stop { height: 26px; border: 1px solid #c3c6c5; border-radius: 3px; background: #fbfdfc; margin-bottom: 4.500px; flex: none; }
.stop.open { height: 116px; }
.sh { display: flex; align-items: center; height: 24px; padding: 0 6px 0 8px; }
.sh span { flex: 1; margin-left: 4px; }
.sh em { font-style: normal; font-size: 11px; margin-right: 5px; }
.car { width: 6px; height: 9px; }
.sh .car.dn { width: 7px; height: 5px; }
.bars { width: 10px; height: 9px; color: #111; }
.acts { display: flex; justify-content: flex-end; margin: 5px 4px 0 0; }
.acts span { width: 24px; height: 20px; display: flex; align-items: center; justify-content: center; color: #fff; }
.acts svg { width: 11px; height: 11px; }
.acts svg.dn { width: 9px; height: 6px; }
.a-save { background: #70a2cd; border-radius: 3px 0 0 3px; }
.acts .a-edit { color: #222; background: #fff; border: 1px solid #ccc; }
.a-del { background: #d9534f; }
.a-add { background: #5cb85c; border-right: 1px solid #4cae4c; }
.a-more { background: #5cb85c; border-radius: 0 3px 3px 0; }
.times { display: flex; gap: 27px; padding: 0 4px; }
.times label { flex: 1; }
.times b { display: block; margin: 1px 0 4px; white-space: nowrap; }
.inp { display: block; height: 27px; border: 1px solid #ccc; border-radius: 3px; background: #fff; line-height: 26px; padding-left: 10px; color: #555; }
.addstop { margin-top: 5px; }
.sosta { margin: 1px 0 0 14px; flex: none; }
.speed { display: flex; margin: 5px 0 0 13px; flex: none; }
.s1 { width: 121px; }
.s2 { width: 205px; margin: 1px 0 0 14px; border-radius: 3px 0 0 3px; color: #999; padding-left: 8px; }
.calc { width: 91px; margin: 1px 0 0 -1px; border-radius: 0 3px 3px 0; gap: 4px; }
.tip { margin-top: 17px; height: 50px; background: #f5f5f5; border: 1px solid #e3e3e3; border-radius: 3px; line-height: 17px; padding: 7px 8px; letter-spacing: .04px; white-space: nowrap; }
.tip svg { width: 10px; height: 10px; margin: 0 5px -1px 1px; }
.route { height: 25px; border-top: 1px solid #ddd; border-bottom: 1px solid #ddd; line-height: 22px; padding-left: 11px; white-space: nowrap; }
.route .car { vertical-align: -2px; margin-right: 7px; width: 5px; }
.code { color: #8a8a70; margin-right: 4px; }
.thumb2 { position: absolute; left: 463px; top: 181px; width: 4px; height: 436px; background: #888; }

.map { flex: 1; position: relative; }
.canvas { display: block; width: 1102px; height: 938px; }
.canvas text { font-family: "Roboto", "Noto Sans", sans-serif; font-weight: 500; }
.lab text { paint-order: stroke; stroke: rgba(240,236,232,.6); stroke-width: 1px; }
.brown { fill: #8a7064; } .orange { fill: #c4683a; } .green { fill: #3a7a2c; } .dark { fill: #505050; } .olive { fill: #70641e; }
.canvas .river { fill: #6676c0; font-style: italic; }
.shields rect { fill: #f4f4f4; stroke: #333; }
.shields text { font-size: 8.500px; font-weight: bold; text-anchor: middle; fill: #444; }
.canvas .num { fill: #e8e8ff; font-size: 11px; font-weight: bold; text-anchor: middle; }
.layers, .zoomc, .fullc { position: absolute; border: 2px solid #b9b6b3; border-radius: 4px; background: #fff; }
.layers { left: 10px; top: 9px; width: 43px; height: 44px; padding: 8px 7px; }
.zoomc { right: 9px; top: 9px; width: 30px; height: 57px; }
.zoomc span { display: block; height: 27px; text-align: center; font: bold 19px/27px "Liberation Sans", sans-serif; color: #000; }
.zoomc span:first-child { border-bottom: 1px solid #ccc; }
.fullc { right: 9px; top: 76px; width: 30px; height: 29px; padding: 6px 6px; color: #000; }
.fullc svg { display: block; width: 14px; height: 14px; }
.bar { position: absolute; left: 739px; top: 889px; height: 30px; display: flex; font-size: 12.500px; }
.bar span { border: 1px solid #ccc; border-right-width: 0; background: #fff; display: flex; align-items: center; justify-content: center; gap: 4px; padding-bottom: 1px; }
.bar svg { width: 13px; height: 13px; }
.bar svg.up { width: 7px; height: 3px; margin-top: 3px; }
.bar svg.car { width: 6px; height: 10px; }
.bar svg.cam { width: 15px; height: 13px; }
.b1 { width: 38px; border-radius: 3px 0 0 3px; } .b2 { width: 71px; } .b3 { width: 39px; } .bar .b4 { width: 48px; gap: 7px; }
.bar .b5, .bar .b6 { background: #337ab7; border-color: #2e6da4; color: #fff; }
.b5 { width: 40px; } .b6 { width: 23px; border-radius: 0 3px 3px 0; }
.attr { position: absolute; right: 0; top: 923px; width: 278px; height: 14px; background: rgba(255,255,255,.7); font-size: 10.200px; line-height: 14px; padding-left: 5px; white-space: nowrap; }
.attr a { color: #0078a8; }

.backdrop { position: absolute; left: 0; top: 0; width: 1920px; height: 937px; background: rgba(0,0,0,.5); }
.strip { position: absolute; left: 0; top: 937px; width: 1920px; height: 1px; background: linear-gradient(90deg, #15191d 48px, #ccc 48px 392px, #15191d 392px 639px, #777 639px 687px, #15191d 687px); }

.modal { position: absolute; left: 691px; top: 28px; width: 538px; height: 441px; background: #fff; border-radius: 5px; box-shadow: 0 5px 15px rgba(0,0,0,.5), 0 0 1px rgba(0,0,0,.5); font-size: 12.500px; line-height: 17px; }
.m-head { height: 51px; border-bottom: 1px solid #e5e5e5; padding: 16px 13px; font-size: 16px; line-height: 19px; letter-spacing: .08px; }
.m-body { height: 332px; padding: 14px 13px 0 14px; }
.intro { margin: 0; white-space: nowrap; letter-spacing: .035px; margin-left: -.5px; }
.m-label { display: block; margin: 9px 0 4px .5px; white-space: nowrap; letter-spacing: .04px; }
.m-select { height: 31px; border: 1px solid #ccc; border-radius: 4px; padding: 6px 4px 0 14px; color: #555; display: flex; justify-content: space-between; box-shadow: inset 0 1px 1px rgba(0,0,0,.075); letter-spacing: .08px; }
.m-select svg { width: 10px; height: 7px; margin-top: 5px; color: #333; }
.alert { margin-top: 17px; height: 46px; border: 1px solid #faebcc; border-radius: 4px; background: #fcf8e3; color: #8a6d3b; padding: 13px; white-space: nowrap; letter-spacing: .05px; }
.note { margin-top: 18px; height: 111px; border: 1px solid #bce8f1; border-radius: 4px; background: #d9edf7; color: #31708f; padding: 20px 13px; }
.n-title { display: flex; align-items: center; gap: 6px; padding-left: 3px; }
.n-title svg { width: 11px; height: 11px; }
.note p { margin: 7px 0 0; font-size: 10.700px; white-space: nowrap; }
.m-foot { border-top: 1px solid #e5e5e5; padding: 15px 13px; display: flex; justify-content: flex-end; gap: 4px; }
.mbtn { height: 29px; width: 60px; border: 1px solid #ccc; border-radius: 3px; background: #fff; padding: 0 0 2px; white-space: nowrap; }
.primary { width: 137px; background: #337ab7; border-color: #2e6da4; color: #fff; font-weight: bold; letter-spacing: -.4px; }
```
